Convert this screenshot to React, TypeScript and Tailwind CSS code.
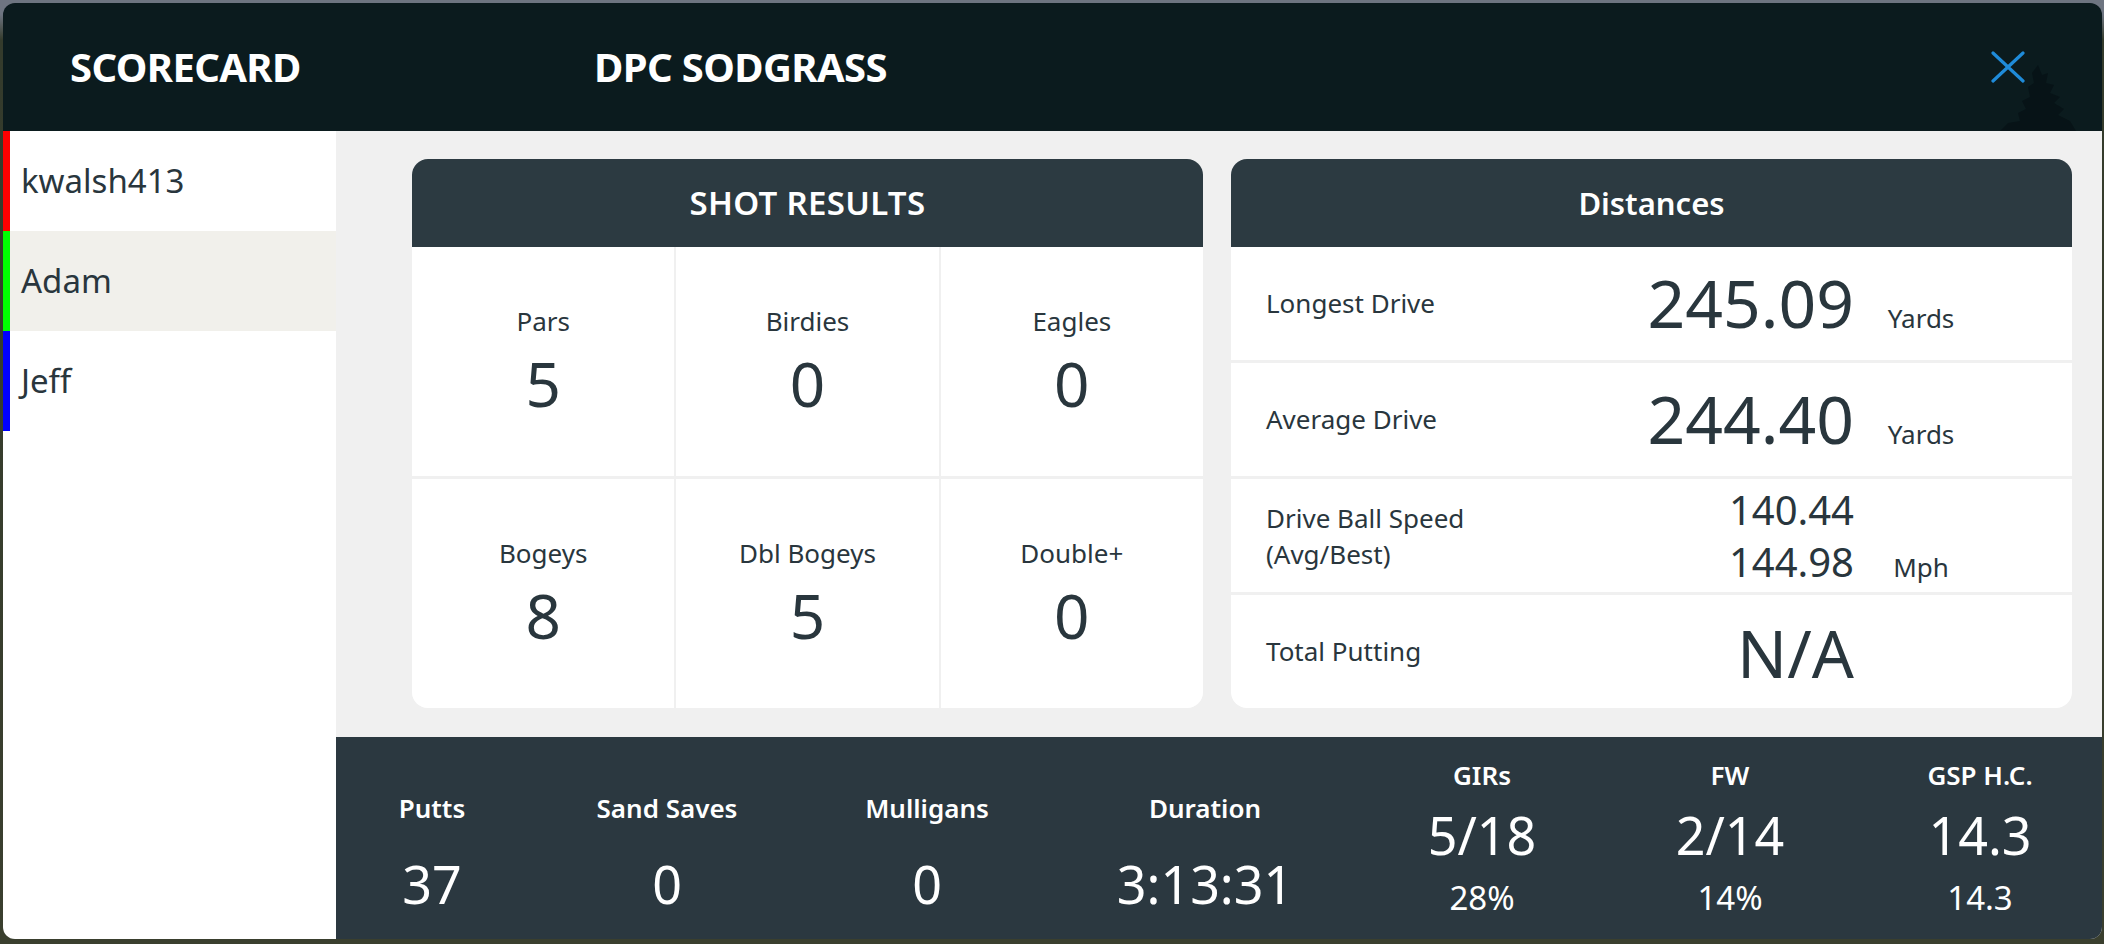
import React from 'react'

const players = [
  { name: 'kwalsh413', color: 'border-[#ff0000]', active: false },
  { name: 'Adam', color: 'border-[#00ff00]', active: true },
  { name: 'Jeff', color: 'border-[#0000ff]', active: false },
]

const shotResults = [
  { label: 'Pars', value: '5' },
  { label: 'Birdies', value: '0' },
  { label: 'Eagles', value: '0' },
  { label: 'Bogeys', value: '8' },
  { label: 'Dbl Bogeys', value: '5' },
  { label: 'Double+', value: '0' },
]

const roundStats = [
  { label: 'Putts', value: '37', width: 'w-[192px]' },
  { label: 'Sand Saves', value: '0', width: 'w-[278px]' },
  { label: 'Mulligans', value: '0', width: 'w-[242px]' },
  { label: 'Duration', value: '3:13:31', width: 'w-[314px]' },
]

const ratioStats = [
  { label: 'GIRs', value: '5/18', sub: '28%', width: 'w-[240px]' },
  { label: 'FW', value: '2/14', sub: '14%', width: 'w-[256px]' },
  { label: 'GSP H.C.', value: '14.3', sub: '14.3', width: 'w-[244px]' },
]

function CloseIcon() {
  return (
    <svg width="34" height="32" viewBox="0 0 34 32" fill="none">
      <path d="M2 2 L32 30 M32 2 L2 30" stroke="#1f8bd9" strokeWidth="3.2" strokeLinecap="round" />
    </svg>
  )
}

function DistanceRow({ label, value, unit }: { label: string; value: string; unit?: string }) {
  return (
    <div className="flex-1 flex items-center bg-white pl-[35px]">
      <div className="w-[300px] text-[26px]">{label}</div>
      <div className="flex items-baseline">
        <div className="w-[288px] text-right text-[66px] leading-none">{value}</div>
        <div className="w-[134px] text-center text-[26px]">{unit}</div>
      </div>
    </div>
  )
}

export default function App() {
  return (
    <div
      className="w-[2104px] h-[944px] overflow-hidden pt-[3px] pl-[3px] pr-[2px] pb-[5px] bg-[linear-gradient(to_bottom,#6e7581_0px,#6e7581_14px,#343b2c_40px,#3a3f2e_100%)] text-[#29363d]"
      style={{ fontFamily: '"Noto Sans", "Open Sans", sans-serif' }}
    >
      <div className="h-full w-full rounded-[12px] overflow-hidden flex flex-col">
        {/* Header */}
        <div className="relative h-[128px] shrink-0 bg-[#0b1b1e] flex items-center text-white">
          <div className="w-[591px] pl-[67px] text-[40px] font-bold tracking-[-0.6px]">SCORECARD</div>
          <div className="text-[40px] font-bold tracking-[-0.6px]">DPC SODGRASS</div>
          <svg className="absolute right-[22px] bottom-0" width="90" height="66" viewBox="0 0 90 66">
            <path
              d="M48 0 L52 10 L58 8 L56 18 L64 20 L60 28 L70 32 L64 38 L74 44 L68 50 L80 56 L86 66 L10 66 L18 58 L30 56 L28 48 L36 44 L32 36 L40 32 L38 22 L44 18 L42 8 Z"
              fill="#061215"
              opacity="0.8"
            />
          </svg>
          <button className="ml-auto mr-[77px] relative">
            <CloseIcon />
          </button>
        </div>

        <div className="flex-1 flex min-h-0">
          {/* Sidebar */}
          <div className="w-[333px] shrink-0 bg-white">
            {players.map((p) => (
              <div
                key={p.name}
                className={`h-[100px] flex items-center border-l-[7px] pl-[11px] text-[33px] ${p.color} ${
                  p.active ? 'bg-[#f1f0eb]' : 'bg-white'
                }`}
              >
                {p.name}
              </div>
            ))}
          </div>

          {/* Main */}
          <div className="flex-1 flex flex-col bg-[#f0f0f0] min-w-0">
            <div className="flex-1 flex gap-[28px] pl-[76px] pr-[30px] pt-[28px] pb-[29px]">
              {/* Shot results */}
              <div className="w-[791px] flex flex-col rounded-[16px] overflow-hidden bg-white">
                <div className="h-[88px] shrink-0 bg-[#2c3a41] flex items-center justify-center text-white text-[33px] font-semibold tracking-[0.3px]">
                  SHOT RESULTS
                </div>
                <div className="flex-1 grid grid-cols-3 grid-rows-2 gap-x-[2px] gap-y-[3px] bg-[#f0f0f0]">
                  {shotResults.map((s) => (
                    <div key={s.label} className="bg-white flex flex-col items-center justify-center">
                      <div className="text-[26px] leading-[34px]">{s.label}</div>
                      <div className="text-[62px] leading-[74px] mt-[8px]">{s.value}</div>
                    </div>
                  ))}
                </div>
              </div>

              {/* Distances */}
              <div className="flex-1 flex flex-col rounded-[16px] overflow-hidden bg-[#f0f0f0]">
                <div className="h-[88px] shrink-0 bg-[#2c3a41] flex items-center justify-center text-white text-[31px] font-semibold">
                  Distances
                </div>
                <div className="flex-1 flex flex-col gap-[3px]">
                  <DistanceRow label="Longest Drive" value="245.09" unit="Yards" />
                  <DistanceRow label="Average Drive" value="244.40" unit="Yards" />
                  <div className="flex-1 flex items-center bg-white pl-[35px]">
                    <div className="w-[300px] text-[26px] leading-[36px]">
                      Drive Ball Speed
                      <br />
                      (Avg/Best)
                    </div>
                    <div className="flex flex-col">
                      <div className="flex items-baseline">
                        <div className="w-[288px] text-right text-[40px] leading-[52px]">140.44</div>
                        <div className="w-[134px]" />
                      </div>
                      <div className="flex items-baseline">
                        <div className="w-[288px] text-right text-[40px] leading-[52px]">144.98</div>
                        <div className="w-[134px] text-center text-[26px]">Mph</div>
                      </div>
                    </div>
                  </div>
                  <DistanceRow label="Total Putting" value="N/A" />
                </div>
              </div>
            </div>

            {/* Bottom stats */}
            <div className="h-[202px] shrink-0 bg-[#2b3840] flex items-center text-white">
              {roundStats.map((s) => (
                <div key={s.label} className={`${s.width} shrink-0 flex flex-col items-center pt-[31px]`}>
                  <div className="text-[26px] font-semibold leading-[34px]">{s.label}</div>
                  <div className="text-[52px] leading-[64px] mt-[27px]">{s.value}</div>
                </div>
              ))}
              {ratioStats.map((s) => (
                <div key={s.label} className={`${s.width} shrink-0 flex flex-col items-center`}>
                  <div className="text-[26px] font-semibold leading-[34px]">{s.label}</div>
                  <div className="text-[52px] leading-[60px] mt-[13px]">{s.value}</div>
                  <div className="text-[33px] leading-[42px] mt-[12px]">{s.sub}</div>
                </div>
              ))}
            </div>
          </div>
        </div>
      </div>
    </div>
  )
}
